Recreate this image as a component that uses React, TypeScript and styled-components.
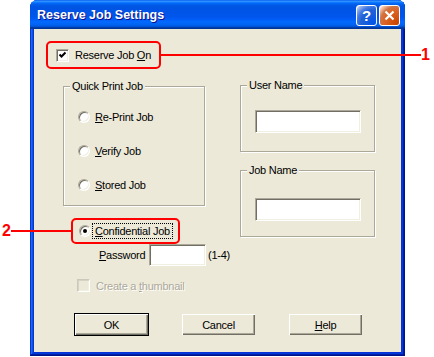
import React from 'react';
import styled, { createGlobalStyle } from 'styled-components';

const GlobalStyle = createGlobalStyle`
    html, body {
        margin: 0;
        padding: 0;
        background: #fff;
    }
    body {
        font-family: "Liberation Sans", Arial, sans-serif;
        font-size: 11px;
        letter-spacing: -0.25px;
        color: #000;
    }
`;

const Stage = styled.div`
    position: relative;
    width: 434px;
    height: 357px;
    padding-left: 30px;
    box-sizing: border-box;
    overflow: hidden;
`;

const Window = styled.div`
    width: 375px;
    height: 356px;
    display: flex;
    flex-direction: column;
    background: #0831d9;
    border-radius: 8px 8px 0 0;
    box-shadow: inset -1px -1px #00138c, inset 1px 1px #0831d9, inset -2px -2px #001ea0,
        inset 2px 2px #166aee, inset -3px -3px #003bda, inset 3px 3px #0855dd;
`;

const TitleBar = styled.div`
    height: 29px;
    flex-shrink: 0;
    display: flex;
    align-items: center;
    box-sizing: border-box;
    padding: 1px 5px 0 7px;
    border-radius: 7px 7px 0 0;
    background: linear-gradient(
        to bottom,
        #0058ee 0%, #3593ff 4%, #288eff 6%, #127dff 8%, #036ffc 10%, #0262ee 14%,
        #0057e5 20%, #0054e3 24%, #0055eb 56%, #005bf5 66%, #026afe 76%,
        #0062ef 86%, #0052d6 92%, #0040ab 94%, #003092 100%
    );
`;

const Title = styled.span`
    flex: 1;
    color: #fff;
    font: bold 12.5px "Liberation Sans", Arial, sans-serif;
    letter-spacing: 0;
    text-shadow: 1px 1px #0f1089;
`;

const TitleButton = styled.div<{ $variant: 'help' | 'close' }>`
    width: 21px;
    height: 21px;
    box-sizing: border-box;
    margin-left: 2px;
    border: 1px solid #fff;
    border-radius: 3px;
    display: flex;
    align-items: center;
    justify-content: center;
    color: #fff;
    font: bold 15px "Liberation Sans", Arial, sans-serif;
    background: ${p => p.$variant === 'close'
        ? 'radial-gradient(circle at 90% 90%, #cc4600 0%, #dc6527 55%, #cd7546 70%, #ffccb2 90%, #fff 100%)'
        : 'radial-gradient(circle at 90% 90%, #0054e9 0%, #2263d5 55%, #4479e4 70%, #a3bbec 90%, #fff 100%)'};
`;

const Client = styled.div`
    flex: 1;
    margin: 0 4px 4px;
    background: #ece9d8;
    padding: 12px 0 0 12px;
    display: flex;
    flex-direction: column;
    align-items: flex-start;
`;

const Highlight = styled.div<{ $w: number; $h: number; $pad: number }>`
    position: relative;
    display: flex;
    align-items: center;
    box-sizing: border-box;
    width: ${p => p.$w}px;
    height: ${p => p.$h}px;
    padding-left: ${p => p.$pad}px;
    border: 2px solid #ff0000;
    border-radius: 5px;
`;

const CalloutLine = styled.span<{ $side: 'left' | 'right'; $len: number }>`
    position: absolute;
    top: 50%;
    margin-top: -1px;
    height: 2px;
    width: ${p => p.$len}px;
    background: #ff0000;
    ${p => (p.$side === 'right' ? 'left: calc(100% + 2px);' : 'right: calc(100% + 2px);')}
`;

const CalloutNum = styled.span<{ $side: 'left' | 'right'; $offset: number }>`
    position: absolute;
    top: 50%;
    transform: translateY(-50%);
    color: #ff0000;
    font: bold 16px "Liberation Sans", Arial, sans-serif;
    letter-spacing: 0;
    ${p => (p.$side === 'right'
        ? `left: calc(100% + ${p.$offset}px);`
        : `right: calc(100% + ${p.$offset}px);`)}
`;

const Option = styled.label<{ $gap: number; $disabled?: boolean }>`
    display: flex;
    align-items: center;
    gap: ${p => p.$gap}px;
    height: 13px;
    color: ${p => (p.$disabled ? '#aca899' : '#000')};
    text-shadow: ${p => (p.$disabled ? '1px 1px #fff' : 'none')};
    white-space: nowrap;
`;

const CheckBox = styled.span<{ $disabled?: boolean }>`
    width: 13px;
    height: 13px;
    box-sizing: border-box;
    flex-shrink: 0;
    display: flex;
    align-items: center;
    justify-content: center;
    background: ${p => (p.$disabled ? '#ece9d8' : '#fff')};
    border: 1px solid;
    border-color: ${p => (p.$disabled ? '#cac8bb #fff #fff #cac8bb' : '#aca899 #fff #fff #aca899')};
    box-shadow: ${p => (p.$disabled
        ? 'inset 1px 1px #d6d3c4, inset -1px -1px #f1efe2'
        : 'inset 1px 1px #716f64, inset -1px -1px #f1efe2')};
`;

const Radio = styled.span<{ $checked?: boolean }>`
    width: 12px;
    height: 12px;
    box-sizing: border-box;
    flex-shrink: 0;
    border-radius: 50%;
    background: #fff;
    border: 1px solid;
    border-color: #aca899 #fff #fff #aca899;
    box-shadow: inset 1px 1px #716f64, inset -1px -1px #f1efe2;
    display: flex;
    align-items: center;
    justify-content: center;

    &::after {
        content: '';
        width: 4px;
        height: 4px;
        border-radius: 50%;
        background: ${p => (p.$checked ? '#000' : 'transparent')};
    }
`;

const FocusText = styled.span`
    outline: 1px dotted #000;
    outline-offset: 1px;
    padding: 0 1px;
`;

const Columns = styled.div`
    display: flex;
    align-items: flex-start;
    gap: 35px;
    margin: 17px 0 0 17px;
`;

const Column = styled.div<{ $w: number; $top?: number }>`
    display: flex;
    flex-direction: column;
    align-items: flex-start;
    width: ${p => p.$w}px;
    margin-top: ${p => p.$top ?? 0}px;
`;

const GroupBox = styled.div<{ $w: number; $h: number; $mt?: number }>`
    display: flex;
    flex-direction: column;
    align-items: flex-start;
    box-sizing: border-box;
    width: ${p => p.$w}px;
    height: ${p => p.$h}px;
    margin-top: ${p => p.$mt ?? 0}px;
    border: 1px solid #aca899;
    box-shadow: 1px 1px 0 #fff, inset 1px 1px 0 #fff;
`;

const GroupTitle = styled.span`
    margin: -7px 0 0 6px;
    padding: 0 2px;
    line-height: 13px;
    background: #ece9d8;
    white-space: nowrap;
`;

const OptionList = styled.div`
    display: flex;
    flex-direction: column;
    gap: 21px;
    margin: 17px 0 0 14px;
`;

const TextBox = styled.div<{ $w: number; $h: number; $mt?: number; $ml?: number }>`
    width: ${p => p.$w}px;
    height: ${p => p.$h}px;
    box-sizing: border-box;
    flex-shrink: 0;
    margin-top: ${p => p.$mt ?? 0}px;
    margin-left: ${p => p.$ml ?? 0}px;
    background: #fff;
    border: 1px solid;
    border-color: #aca899 #fff #fff #aca899;
    box-shadow: inset 1px 1px #716f64, inset -1px -1px #f1efe2;
`;

const Spaced = styled.div<{ $mt: number; $ml: number }>`
    margin: ${p => p.$mt}px 0 0 ${p => p.$ml}px;
`;

const PasswordRow = styled.div`
    display: flex;
    align-items: center;
    margin-left: 36px;
    height: 22px;
    white-space: nowrap;
`;

const PasswordLabel = styled.span`
    width: 50px;
    flex-shrink: 0;
`;

const Hint = styled.span`
    margin-left: 2px;
`;

const ButtonRow = styled.div`
    display: grid;
    grid-template-columns: repeat(3, 75px);
    column-gap: 32px;
    margin: 21px 0 0 28px;
`;

const Button = styled.div<{ $default?: boolean }>`
    height: 23px;
    box-sizing: border-box;
    display: flex;
    align-items: center;
    justify-content: center;
    background: #ece9d8;
    border: 1px solid ${p => (p.$default ? '#000' : 'transparent')};
    box-shadow: inset 1px 1px #fff, inset -1px -1px #716f64, inset -2px -2px #aca899;
`;

const CheckMark = () => (
    <svg width="9" height="9" viewBox="0 0 9 9">
        <path d="M1.5 3.5 L3.5 5.5 L7.5 1.5" stroke="#000" strokeWidth="2" fill="none" />
    </svg>
);

const CloseIcon = () => (
    <svg width="11" height="11" viewBox="0 0 11 11">
        <path d="M1.5 1.5 L9.5 9.5 M9.5 1.5 L1.5 9.5" stroke="#fff" strokeWidth="2.2" />
    </svg>
);

export default function App() {
    return (
        <>
            <GlobalStyle />
            <Stage>
                <Window>
                    <TitleBar>
                        <Title>Reserve Job Settings</Title>
                        <TitleButton $variant="help">?</TitleButton>
                        <TitleButton $variant="close"><CloseIcon /></TitleButton>
                    </TitleBar>
                    <Client>
                        <Highlight $w={115} $h={28} $pad={8}>
                            <Option $gap={6}>
                                <CheckBox><CheckMark /></CheckBox>
                                <span>Reserve Job <u>O</u>n</span>
                            </Option>
                            <CalloutLine $side="right" $len={260} />
                            <CalloutNum $side="right" $offset={262}>1</CalloutNum>
                        </Highlight>

                        <Columns>
                            <Column $w={142}>
                                <GroupBox $w={142} $h={120}>
                                    <GroupTitle>Quick Print Job</GroupTitle>
                                    <OptionList>
                                        <Option $gap={5}>
                                            <Radio />
                                            <span><u>R</u>e-Print Job</span>
                                        </Option>
                                        <Option $gap={5}>
                                            <Radio />
                                            <span><u>V</u>erify Job</span>
                                        </Option>
                                        <Option $gap={5}>
                                            <Radio />
                                            <span><u>S</u>tored Job</span>
                                        </Option>
                                    </OptionList>
                                </GroupBox>

                                <Spaced $mt={12} $ml={8}>
                                    <Highlight $w={109} $h={26} $pad={6}>
                                        <Option $gap={3}>
                                            <Radio $checked />
                                            <FocusText><u>C</u>onfidential Job</FocusText>
                                        </Option>
                                        <CalloutLine $side="left" $len={60} />
                                        <CalloutNum $side="left" $offset={62}>2</CalloutNum>
                                    </Highlight>
                                </Spaced>

                                <PasswordRow>
                                    <PasswordLabel><u>P</u>assword</PasswordLabel>
                                    <TextBox $w={57} $h={22} />
                                    <Hint>(1-4)</Hint>
                                </PasswordRow>

                                <Spaced $mt={13} $ml={14}>
                                    <Option $gap={6} $disabled>
                                        <CheckBox $disabled />
                                        <span>Create a <u>t</u>humbnail</span>
                                    </Option>
                                </Spaced>
                            </Column>

                            <Column $w={135} $top={-1}>
                                <GroupBox $w={135} $h={67}>
                                    <GroupTitle>User Name</GroupTitle>
                                    <TextBox $w={106} $h={23} $mt={18} $ml={14} />
                                </GroupBox>
                                <GroupBox $w={135} $h={67} $mt={18}>
                                    <GroupTitle>Job Name</GroupTitle>
                                    <TextBox $w={106} $h={23} $mt={21} $ml={14} />
                                </GroupBox>
                            </Column>
                        </Columns>

                        <ButtonRow>
                            <Button $default>OK</Button>
                            <Button>Cancel</Button>
                            <Button><span><u>H</u>elp</span></Button>
                        </ButtonRow>
                    </Client>
                </Window>
            </Stage>
        </>
    );
}
